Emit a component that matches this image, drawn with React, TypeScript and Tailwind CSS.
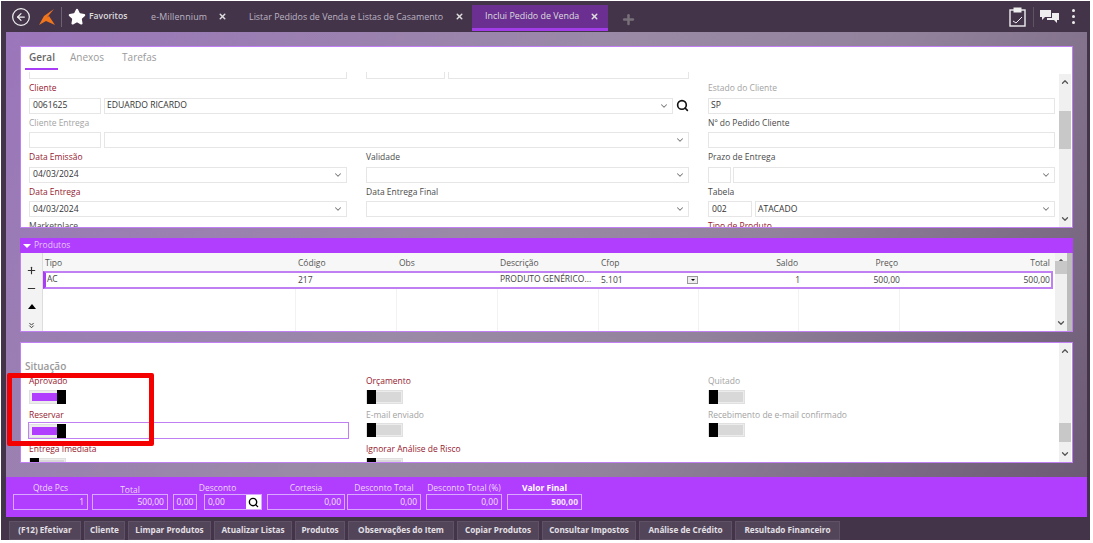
import { ChevronDown, ChevronUp, ChevronsDown, CircleArrowLeft, Minus, Plus, Search, Star, X } from 'lucide-react';

const purple = 'bg-[#b13dff]';

function Input({ value = '', className = '', chevron = false }: { value?: string; className?: string; chevron?: boolean }) {
  return (
    <div className={`h-[16px] border border-[#e6e6e6] bg-white flex items-center justify-between pl-[2px] pr-[3px] text-[#333] text-[8.6px] ${className}`}>
      <span>{value}</span>
      {chevron && <ChevronDown size={10} strokeWidth={2.5} className="text-[#777]" />}
    </div>
  );
}

function Label({ children, tone = 'dark' }: { children: string; tone?: 'red' | 'grey' | 'dark' }) {
  const color = tone === 'red' ? 'text-[#96202f]' : tone === 'grey' ? 'text-[#a3a3a3]' : 'text-[#4a4a4a]';
  return <div className={`h-[18.5px] pt-[3px] leading-[12px] text-[8.5px] whitespace-nowrap ${color}`}>{children}</div>;
}

function Scrollbar({ thumbTop, thumbHeight, className = '' }: { thumbTop: string; thumbHeight: string; className?: string }) {
  return (
    <div className={`w-[12px] bg-[#f0f0f0] flex flex-col items-center justify-between py-[3px] shrink-0 ${className}`}>
      <ChevronUp size={10} strokeWidth={3} className="text-[#555]" />
      <div className={`w-full bg-[#c8c8c8] ${thumbTop} ${thumbHeight}`} />
      <ChevronDown size={10} strokeWidth={3} className="text-[#555]" />
    </div>
  );
}

function Toggle({ on = false }: { on?: boolean }) {
  return (
    <div className="w-[37px] h-[14px] bg-[#ececec] border border-[#e0e0e0] flex items-center">
      {on ? (
        <>
          <div className="w-[25px] h-[8px] ml-[2px] bg-[#b13dff]" />
          <div className="w-[9px] h-[14px] bg-black ml-auto -mr-px" />
        </>
      ) : (
        <>
          <div className="w-[9px] h-[14px] bg-black" />
          <div className="flex-1 h-[10px] mr-px bg-[#d8d8d8]" />
        </>
      )}
    </div>
  );
}

function Switch({ label, tone, on = false }: { label: string; tone: 'red' | 'grey'; on?: boolean }) {
  return (
    <div>
      <Label tone={tone}>{label}</Label>
      <div className="h-[16px] -mt-px">
        <Toggle on={on} />
      </div>
    </div>
  );
}

function TopBar() {
  return (
    <div className="h-[31px] flex items-center shrink-0 text-[#bdb5c2] text-[8.9px]">
      <CircleArrowLeft size={20} strokeWidth={1.5} className="text-[#eee] ml-[5px]" />
      <svg width="18" height="18" viewBox="0 0 18 18" className="ml-[7px]">
        <path d="M16 1 L6 8 L1 17 L8 13 L17 17 L11 8 L9 9.5 Z" fill="#f0761e" />
      </svg>
      <div className="w-px h-[20px] bg-[#6d6274] ml-[5px]" />
      <Star size={18} fill="#fff" className="text-white ml-[6px]" />
      <span className="ml-[3px] w-[62px] font-semibold text-[#ddd] text-[8.6px]">Favoritos</span>
      <span className="w-[67px] tracking-[0.15px]">e-Millennium</span>
      <X size={9} strokeWidth={4} className="text-[#ddd]" />
      <span className="ml-[22px] w-[206px] whitespace-nowrap">Listar Pedidos de Venda e Listas de Casamento</span>
      <X size={9} strokeWidth={4} className="text-[#ddd]" />
      <div className="ml-[8px] w-[136px] h-[26px] mt-[2px] bg-[#6b2f92] border-b-[3px] border-[#a23be8] flex items-center pl-[13px] text-[#ddd]">
        <span className="w-[105px] whitespace-nowrap">Inclui Pedido de Venda</span>
        <X size={9} strokeWidth={4} className="text-[#ddd]" />
      </div>
      <Plus size={15} strokeWidth={4} className="text-[#777079] ml-[13px] mt-[6px]" />
      <div className="ml-auto flex items-center mr-[12px]">
        <svg width="17" height="20" viewBox="0 0 17 20" fill="none" stroke="#eee">
          <rect x="1" y="3" width="15" height="16" strokeWidth="1.4" />
          <rect x="5" y="1" width="7" height="4" fill="#eee" />
          <path d="M4 14 L7 16 L13 10" strokeWidth="1" />
        </svg>
        <div className="w-px h-[20px] bg-[#5f5366] ml-[7px]" />
        <svg width="21" height="15" viewBox="0 0 21 15" className="ml-[5px]" fill="#eee">
          <path d="M1 1 H12 V8 H6 L3 11 V8 H1 Z" />
          <path d="M13 4 H20 V11 H18 V14 L15 11 H8 V9 H13 Z" />
        </svg>
        <div className="ml-[12px] flex flex-col gap-[3px]">
          <div className="w-[3px] h-[3px] rounded-full bg-[#eee]" />
          <div className="w-[3px] h-[3px] rounded-full bg-[#eee]" />
          <div className="w-[3px] h-[3px] rounded-full bg-[#eee]" />
        </div>
      </div>
    </div>
  );
}

function GeralPanel() {
  return (
    <div className="h-[182px] border border-[#c07ff2] bg-white flex flex-col shrink-0">
      <div className="h-[25px] flex items-start pl-[4px] text-[10px] text-[#9a9a9a] shrink-0">
        <div className="h-[23px] w-[33px] border-b-[2px] border-[#a93df5] pt-[3px] pl-[4px] font-semibold text-[#666]">Geral</div>
        <span className="ml-[12px] pt-[3px]">Anexos</span>
        <span className="ml-[18px] pt-[3px]">Tarefas</span>
      </div>
      <div className="flex-1 flex min-h-0">
        <div className="flex-1 overflow-hidden pl-[8px]">
          <div className="grid grid-cols-[318px_323px_347px] gap-x-[19px]">
            <Input className="-mt-[9px]" />
            <div className="flex gap-[3px] -mt-[9px]">
              <Input className="w-[79px]" />
              <Input className="flex-1" />
            </div>
            <div />

            <div className="col-span-2">
              <Label tone="red">Cliente</Label>
              <div className="flex gap-[3px] items-center">
                <Input value="0061625" className="w-[72px] pl-[3px]" />
                <Input value="EDUARDO RICARDO" className="flex-1" chevron />
                <Search size={13} strokeWidth={3} className="text-[#111]" />
              </div>
            </div>
            <div>
              <Label tone="grey">Estado do Cliente</Label>
              <Input value="SP" />
            </div>

            <div className="col-span-2">
              <Label tone="grey">Cliente Entrega</Label>
              <div className="flex gap-[3px]">
                <Input className="w-[72px]" />
                <Input className="flex-1" chevron />
              </div>
            </div>
            <div>
              <Label>Nº do Pedido Cliente</Label>
              <Input />
            </div>

            <div>
              <Label tone="red">Data Emissão</Label>
              <Input value="04/03/2024" className="pl-[3px]" chevron />
            </div>
            <div>
              <Label>Validade</Label>
              <Input chevron />
            </div>
            <div>
              <Label>Prazo de Entrega</Label>
              <div className="flex gap-[2px]">
                <Input className="w-[23px]" />
                <Input className="flex-1" chevron />
              </div>
            </div>

            <div>
              <Label tone="red">Data Entrega</Label>
              <Input value="04/03/2024" className="pl-[3px]" chevron />
            </div>
            <div>
              <Label>Data Entrega Final</Label>
              <Input chevron />
            </div>
            <div>
              <Label>Tabela</Label>
              <div className="flex gap-[3px]">
                <Input value="002" className="w-[44px] pl-[3px]" />
                <Input value="ATACADO" className="flex-1" chevron />
              </div>
            </div>

            <Label>Marketplace</Label>
            <div />
            <Label tone="red">Tipo de Produto</Label>
          </div>
        </div>
        <Scrollbar thumbTop="-mt-[42px]" thumbHeight="h-[38px]" className="mt-[2px] mr-px" />
      </div>
    </div>
  );
}

const columns = 'grid-cols-[253px_101px_101px_101px_100px_100px_101px_1fr]';

function ProdutosPanel() {
  return (
    <div className="h-[94px] flex flex-col shrink-0">
      <div className={`h-[15px] ${purple} flex items-center pl-[3px] text-[8.5px] text-[#e6c8ff] shrink-0`}>
        <span className="w-0 h-0 border-x-[4px] border-x-transparent border-t-[4px] border-t-white mr-[3px]" />
        Produtos
      </div>
      <div className="flex-1 flex bg-white border border-t-0 border-[#c07ff2] text-[8.5px] min-h-0">
        <div className="w-[22px] bg-[#f3f3f3] border-r border-[#ddd] flex flex-col items-center pt-[12px] gap-[7px] text-[#333] shrink-0">
          <Plus size={11} strokeWidth={2.5} />
          <Minus size={11} strokeWidth={2.5} />
          <span className="w-0 h-0 mt-[3px] border-x-[4px] border-x-transparent border-b-[5px] border-b-black" />
          <ChevronsDown size={9} strokeWidth={2.5} className="mt-[5px]" />
        </div>
        <div className="flex-1 flex flex-col min-w-0">
          <div className={`h-[18px] shrink-0 grid ${columns} bg-[#f7f7f7] items-center text-[#555] pl-[2px] pr-[4px] pt-[3px] font-medium`}>
            <span>Tipo</span>
            <span>Código</span>
            <span>Obs</span>
            <span>Descrição</span>
            <span>Cfop</span>
            <span className="text-right pr-[3px]">Saldo</span>
            <span className="text-right pr-[4px]">Preço</span>
            <span className="text-right pr-[1px]">Total</span>
          </div>
          <div className={`h-[18px] shrink-0 grid ${columns} border-2 border-[#c07ff2] border-l-[3px] border-l-[#a93df5] items-center text-[#444] mr-[2px]`}>
            <span className="pl-[1px] -mt-[1px]">AC</span>
            <span className="-ml-px">217</span>
            <span />
            <span className="whitespace-nowrap -mt-[1px] -ml-[1px]">PRODUTO GENÉRICO...</span>
            <div className="flex items-center justify-between pr-[4px]">
              <span className="-ml-[1px]">5.101</span>
              <span className="w-[11px] h-[8px] bg-[#eee] border border-[#999] flex items-center justify-center">
                <span className="w-0 h-0 border-x-[2px] border-x-transparent border-t-[2px] border-t-black" />
              </span>
            </div>
            <span className="text-right pr-[2px]">1</span>
            <span className="text-right pr-[3px]">500,00</span>
            <span className="text-right pr-[1px]">500,00</span>
          </div>
          <div className={`flex-1 grid ${columns}`}>
            <div className="border-r border-[#f2f2f2]" />
            <div className="border-r border-[#f2f2f2]" />
            <div className="border-r border-[#f2f2f2]" />
            <div className="border-r border-[#f2f2f2]" />
            <div className="border-r border-[#f2f2f2]" />
            <div className="border-r border-[#f2f2f2]" />
            <div className="border-r border-[#f2f2f2]" />
            <div />
          </div>
        </div>
        <Scrollbar thumbTop="-mt-[50px]" thumbHeight="h-[13px]" />
        <div className="w-[5px] bg-[#bcbcbc] shrink-0" />
      </div>
    </div>
  );
}

function SituacaoPanel() {
  return (
    <div className="flex-1 relative border border-[#c07ff2] bg-white flex min-h-0">
      <div className="flex-1 overflow-hidden pl-[8px] pt-[16px]">
        <div className="text-[10px] font-semibold text-[#9a9a9a] leading-[14px] -ml-[4px]">Situação</div>
        <div className="grid grid-cols-[318px_323px_347px] gap-x-[19px] -mt-[1px]">
          <Switch label="Aprovado" tone="red" on />
          <Switch label="Orçamento" tone="red" />
          <Switch label="Quitado" tone="grey" />
          <div>
            <Label tone="red">Reservar</Label>
            <div className="border border-[#c07ff2] -ml-px h-[17px] flex items-center w-[321px] -mt-[2px] mb-px">
              <Toggle on />
            </div>
          </div>
          <Switch label="E-mail enviado" tone="grey" />
          <Switch label="Recebimento de e-mail confirmado" tone="grey" />
          <Switch label="Entrega Imediata" tone="red" />
          <Switch label="Ignorar Análise de Risco" tone="red" />
        </div>
      </div>
      <Scrollbar thumbTop="mt-[60px]" thumbHeight="h-[19px]" className="mr-px" />
    </div>
  );
}

function Total({ label, value, className, bold = false, low = false }: { label: string; value: string; className: string; bold?: boolean; low?: boolean }) {
  return (
    <div className={className}>
      <div className={`h-[17px] text-center text-[8.5px] leading-[12px] whitespace-nowrap ${low ? 'pt-[7px]' : 'pt-[5px]'} ${bold ? 'font-bold text-white' : 'text-[#ecd6ff]'}`}>{label}</div>
      <div className={`h-[16px] border border-[#d9a8ff] flex items-center justify-end px-[3px] text-[8.5px] text-[#f1e2ff] ${bold ? 'font-bold' : ''}`}>{value}</div>
    </div>
  );
}

function Totals() {
  return (
    <div className={`h-[40px] ${purple} flex items-start pl-[7px] gap-[3px] shrink-0`}>
      <Total label="Qtde Pcs" value="1" className="w-[75px]" />
      <Total label="Total" value="500,00" low className="w-[76px] ml-[1px]" />
      <div className="ml-[2px]">
        <div className="h-[17px] text-center text-[8.5px] leading-[12px] pt-[5px] text-[#ecd6ff]">Desconto</div>
        <div className="flex gap-[7px] h-[16px] text-[8.5px] text-[#f1e2ff]">
          <div className="w-[24px] border border-[#d9a8ff] flex items-center justify-center">0,00</div>
          <div className="w-[58px] border border-[#d9a8ff] flex items-center pl-[3px] justify-between">
            0,00
            <div className="w-[15px] h-full bg-white flex items-center justify-center">
              <Search size={11} strokeWidth={3} className="text-black" />
            </div>
          </div>
        </div>
      </div>
      <Total label="Cortesia" value="0,00" className="w-[78px] ml-[2px]" />
      <Total label="Desconto Total" value="0,00" className="w-[74px] -ml-px" />
      <Total label="Desconto Total (%)" value="0,00" className="w-[76px] ml-[2px]" />
      <Total label="Valor Final" value="500,00" bold className="w-[75px] ml-[2px]" />
    </div>
  );
}

const actions: [string, string][] = [
  ['(F12) Efetivar', 'w-[72px]'],
  ['Cliente', 'w-[41px]'],
  ['Limpar Produtos', 'w-[83px]'],
  ['Atualizar Listas', 'w-[78px]'],
  ['Produtos', 'w-[50px]'],
  ['Observações do Item', 'w-[106px]'],
  ['Copiar Produtos', 'w-[82px]'],
  ['Consultar Impostos', 'w-[94px]'],
  ['Análise de Crédito', 'w-[93px]'],
  ['Resultado Financeiro', 'w-[105px]'],
];

function Actions() {
  return (
    <div className="h-[23px] flex items-start gap-[3px] pt-[4px] pl-[3px] shrink-0">
      {actions.map(([name, width]) => (
        <div key={name} className={`${width} h-[19px] bg-[#52455a] border border-[#5f5267] flex items-center justify-center text-[8.2px] font-bold text-[#e4e0e6] whitespace-nowrap`}>
          {name}
        </div>
      ))}
    </div>
  );
}

export default function App() {
  return (
    <div className="relative w-[1093px] h-[543px] overflow-hidden bg-white pt-px pl-px pr-[3px] pb-[3px] font-['Open_Sans',sans-serif]">
      <div className="h-full flex flex-col bg-[#43344a] pl-[5px] pr-[3px]">
        <TopBar />
        <div className="flex-1 min-h-0 flex flex-col gap-[10px] px-[14px] pt-[14px] pb-[14px] bg-[linear-gradient(125deg,#9b76bb_0%,#9a8aa6_45%,#93829c_65%,#6c5a75_100%)]">
          <GeralPanel />
          <ProdutosPanel />
          <SituacaoPanel />
        </div>
        <Totals />
        <Actions />
      </div>
      <div className="absolute left-[7px] top-[373px] w-[147px] h-[73px] border-[5px] border-[#f50000] rounded-[2px]" />
    </div>
  );
}
